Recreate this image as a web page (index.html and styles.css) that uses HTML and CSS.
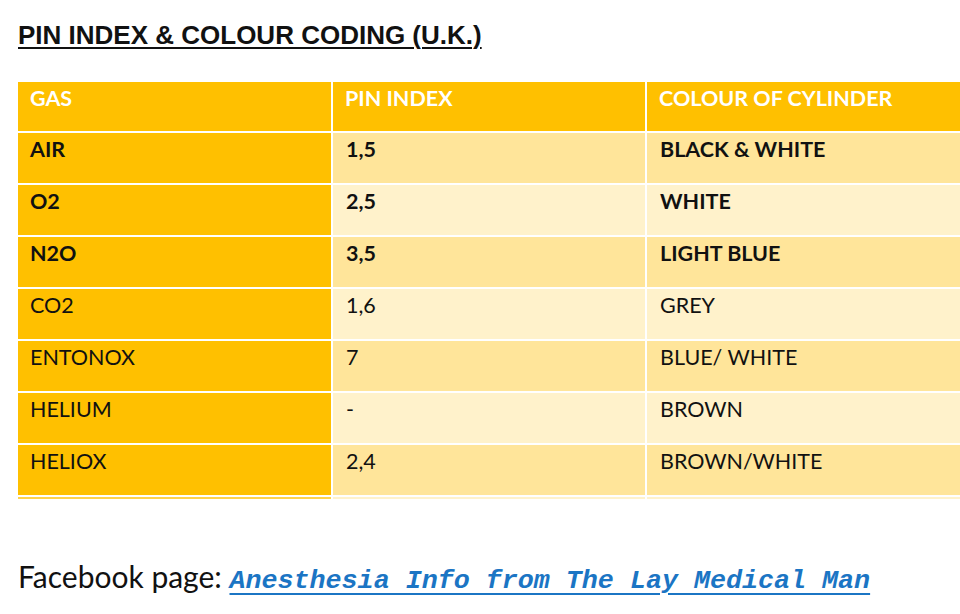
FILE: index.html
```html
<!DOCTYPE html>
<html>
<head>
<meta charset="utf-8">
<link rel="stylesheet" href="styles.css">
</head>
<body>
<h1 class="title">PIN INDEX &amp; COLOUR CODING (U.K.)</h1>
<div class="table">
  <div class="cell head">GAS</div><div class="cell head">PIN INDEX</div><div class="cell head">COLOUR OF CYLINDER</div>
  <div class="cell gas b">AIR</div><div class="cell dark b">1,5</div><div class="cell dark b">BLACK &amp; WHITE</div>
  <div class="cell gas b">O2</div><div class="cell light b">2,5</div><div class="cell light b">WHITE</div>
  <div class="cell gas b">N2O</div><div class="cell dark b">3,5</div><div class="cell dark b">LIGHT BLUE</div>
  <div class="cell gas">CO2</div><div class="cell light">1,6</div><div class="cell light">GREY</div>
  <div class="cell gas">ENTONOX</div><div class="cell dark">7</div><div class="cell dark">BLUE/ WHITE</div>
  <div class="cell gas">HELIUM</div><div class="cell light">-</div><div class="cell light">BROWN</div>
  <div class="cell gas">HELIOX</div><div class="cell dark">2,4</div><div class="cell dark">BROWN/WHITE</div>
  <div class="edge gas-edge"></div><div class="edge"></div><div class="edge"></div>
</div>
<p class="footer">Facebook page: <a class="link" href="#">Anesthesia Info from The Lay Medical Man</a></p>
</body>
</html>
```
FILE: styles.css
```css
html, body {
  margin: 0;
  padding: 0;
  background: #ffffff;
  width: 960px;
  height: 614px;
  overflow: hidden;
}
.title {
  margin: 0;
  padding: 20px 0 0 18px;
  height: 82px;
  box-sizing: border-box;
  font-family: "Liberation Sans", Arial, sans-serif;
  font-weight: bold;
  font-size: 26px;
  line-height: 30px;
  color: #111;
  text-decoration: underline;
  text-decoration-thickness: 2px;
  text-underline-offset: 3px;
}
.table {
  margin-left: 18px;
  width: 942px;
  display: grid;
  grid-template-columns: 313px 312px 1fr;
  grid-template-rows: 49px repeat(7, 50px) 2px;
  gap: 2px;
  font-family: Lato, "Open Sans", sans-serif;
  font-size: 21.5px;
  line-height: 24px;
  color: #111;
}
.cell {
  padding: 4px 0 0 13px;
}
.head {
  background: #ffc000;
  color: #ffffff;
  font-weight: bold;
  padding-left: 12px;
}
.gas {
  background: #ffc000;
  padding-left: 12px;
}
.dark { background: #ffe59a; }
.light { background: #fff2cb; }
.b { font-weight: bold; }
.edge { background: #fff2cb; }
.gas-edge { background: #ffd24a; }
.footer {
  margin: 59px 0 0 18px;
  font-family: Lato, "Open Sans", sans-serif;
  font-size: 30px;
  line-height: 36px;
  color: #111;
}
.link {
  font-family: "Liberation Mono", "Courier New", monospace;
  font-weight: bold;
  font-style: italic;
  font-size: 26.7px;
  color: #1b75c4;
  text-decoration: underline;
  text-decoration-thickness: 2px;
  text-underline-offset: 5px;
}
```
